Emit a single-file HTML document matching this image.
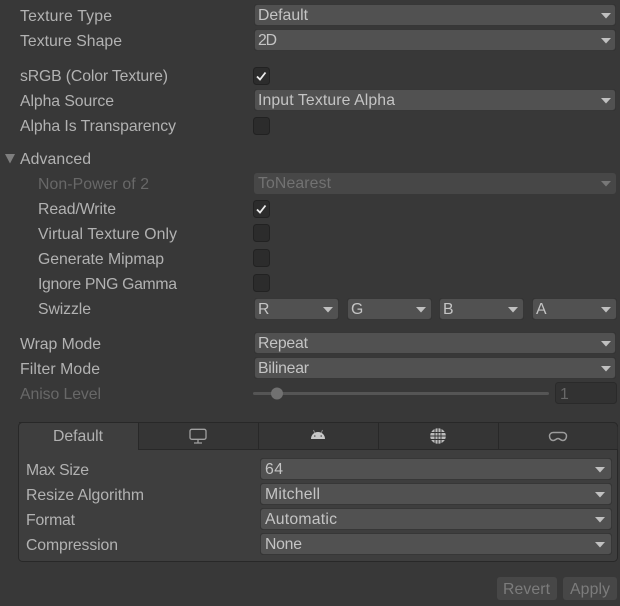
<!DOCTYPE html>
<html><head><meta charset="utf-8"><style>
html,body{margin:0;padding:0;background:#383838}
svg{display:block}
text{font-family:"Liberation Sans",sans-serif;font-size:15.8px;fill:#b2b2b2}
.d{fill:#686868}
.v{fill:#c4c4c4}
.dd{fill:#515151;stroke:#373737;stroke-width:1;filter:drop-shadow(0 .6px 0 #1e1e1e)}
.ar{fill:#c0c0c0}
.cb{fill:#2c2c2c;stroke:#222222;stroke-width:1}
.ck{fill:none;stroke:#ececec;stroke-width:1.800}
</style></head><body>
<svg width="620" height="606" viewBox="0 0 620 606" xmlns="http://www.w3.org/2000/svg">
<rect width="620" height="606" fill="#383838"/>

<text x="20" y="21" textLength="92">Texture Type</text>
<text x="20" y="46" textLength="102">Texture Shape</text>
<text x="20" y="81" textLength="148">sRGB (Color Texture)</text>
<text x="20" y="106" textLength="94">Alpha Source</text>
<text x="20" y="131" textLength="156">Alpha Is Transparency</text>
<text x="20" y="164" textLength="71">Advanced</text>
<text x="38" y="189" textLength="111" class="d">Non-Power of 2</text>
<text x="38" y="214" textLength="78">Read/Write</text>
<text x="38" y="239" textLength="139">Virtual Texture Only</text>
<text x="38" y="264" textLength="126">Generate Mipmap</text>
<text x="38" y="289" textLength="139">Ignore PNG Gamma</text>
<text x="38" y="314" textLength="53">Swizzle</text>
<text x="20" y="349" textLength="81">Wrap Mode</text>
<text x="20" y="374" textLength="80">Filter Mode</text>
<text x="20" y="399" textLength="81" class="d">Aniso Level</text>

<path d="M5 154h10l-5 9.500z" fill="#7e7e7e"/>

<rect class="dd" x="254.500" y="4.500" width="361" height="21" rx="3"/>
<text class="v" x="258" y="20" textLength="50">Default</text>
<path class="ar" d="M601 13h10l-5 5.500z"/>
<rect class="dd" x="254.500" y="29.500" width="361" height="21" rx="3"/>
<text class="v" x="258" y="45" textLength="19">2D</text>
<path class="ar" d="M601 38h10l-5 5.500z"/>

<rect class="cb" x="253.500" y="67.500" width="16" height="17" rx="3"/>
<path class="ck" d="M257 76.500l3 3 5.500-7"/>

<rect class="dd" x="254.500" y="89.500" width="361" height="21" rx="3"/>
<text class="v" x="258" y="105" textLength="137">Input Texture Alpha</text>
<path class="ar" d="M601 98h10l-5 5.500z"/>

<rect class="cb" x="253.500" y="117.500" width="16" height="17" rx="3"/>

<rect x="254" y="173" width="362" height="21" rx="3" fill="#474747"/>
<text class="d" x="258" y="188" textLength="73" style="fill:#727272">ToNearest</text>
<path d="M601 181h10l-5 5.500z" fill="#777"/>

<rect class="cb" x="253.500" y="200.500" width="16" height="17" rx="3"/>
<path class="ck" d="M257 209.500l3 3 5.500-7"/>
<rect class="cb" x="253.500" y="224.500" width="16" height="17" rx="3"/>
<rect class="cb" x="253.500" y="249.500" width="16" height="17" rx="3"/>
<rect class="cb" x="253.500" y="274.500" width="16" height="17" rx="3"/>

<rect class="dd" x="254.500" y="298.500" width="84" height="21" rx="3"/>
<text class="v" x="258" y="314" textLength="10">R</text>
<path class="ar" d="M323 307h10l-5 5.500z"/>
<rect class="dd" x="347.500" y="298.500" width="84" height="21" rx="3"/>
<text class="v" x="351" y="314" textLength="12">G</text>
<path class="ar" d="M416 307h10l-5 5.500z"/>
<rect class="dd" x="439.500" y="298.500" width="84" height="21" rx="3"/>
<text class="v" x="443" y="314" textLength="10">B</text>
<path class="ar" d="M508 307h10l-5 5.500z"/>
<rect class="dd" x="532.500" y="298.500" width="84" height="21" rx="3"/>
<text class="v" x="536" y="314" textLength="11">A</text>
<path class="ar" d="M601 307h10l-5 5.500z"/>

<rect class="dd" x="254.500" y="332.500" width="361" height="21" rx="3"/>
<text class="v" x="258" y="348" textLength="50">Repeat</text>
<path class="ar" d="M601 341h10l-5 5.500z"/>
<rect class="dd" x="254.500" y="357.500" width="361" height="21" rx="3"/>
<text class="v" x="258" y="373" textLength="51">Bilinear</text>
<path class="ar" d="M601 366h10l-5 5.500z"/>

<rect x="253" y="392" width="296" height="3" rx="1.500" fill="#555"/>
<circle cx="277" cy="393.500" r="6" fill="#717171"/>
<rect x="555.500" y="382.500" width="61" height="21" rx="3" fill="#323232" stroke="#2a2a2a"/>
<text class="d" x="560" y="399" textLength="6">1</text>

<!-- tab panel -->
<rect x="18.500" y="422.500" width="599" height="139" rx="4" fill="#3e3e3e" stroke="#282828"/>
<path d="M138.500 449.500V423h475a4 4 0 0 1 4 4v22.500z" fill="#353535"/>
<path d="M138.500 423v26.500H617.500M258.500 423v26M378.500 423v26M498.500 423v26" fill="none" stroke="#282828"/>
<path d="M19 422.500H613.500a4 4 0 0 1 4 4" fill="none" stroke="#282828"/>
<text x="53" y="441" textLength="50">Default</text>

<!-- monitor -->
<g fill="none" stroke="#a0a0a0" stroke-width="1.300">
<rect x="190" y="429.300" width="16" height="10" rx="1.800"/>
<path d="M198 439.500v3M194 443h8"/>
</g>
<!-- android -->
<path d="M311 439c0-4 3-7 7-7s7 3 7 7z" fill="#c8c8c8"/>
<path d="M313.500 430l1.200 3M322.500 430l-1.200 3" stroke="#8e8e8e" fill="none"/>
<circle cx="314.800" cy="436" r=".8" fill="#4a4a4a"/><circle cx="321.200" cy="436" r=".8" fill="#4a4a4a"/>
<!-- web -->
<circle cx="438" cy="436" r="7.800" fill="#bcbcbc"/>
<path d="M430 432.500h16M430 436h16M430 439.500h16M435 428v16M438 428v16M441 428v16" stroke="#353535" stroke-width=".9" fill="none"/>
<!-- vr -->
<path d="M553.500 432.500h9c2.500 0 4 1.500 4 3.500 0 2.500-1.500 4.500-3.700 4.500-2.200 0-2.800-2-4.800-2s-2.600 2-4.800 2c-2.200 0-3.700-2-3.700-4.500 0-2 1.500-3.500 4-3.500z" fill="none" stroke="#9c9c9c" stroke-width="1.500"/>

<text x="26" y="475" textLength="63">Max Size</text>
<text x="26" y="500" textLength="118">Resize Algorithm</text>
<text x="26" y="525" textLength="49">Format</text>
<text x="26" y="550" textLength="92">Compression</text>

<rect class="dd" x="260.500" y="458.500" width="351" height="21" rx="3"/>
<text class="v" x="265" y="474" textLength="18">64</text>
<path class="ar" d="M595 467h10l-5 5.500z"/>
<rect class="dd" x="260.500" y="483.500" width="351" height="21" rx="3"/>
<text class="v" x="265" y="499" textLength="55">Mitchell</text>
<path class="ar" d="M595 492h10l-5 5.500z"/>
<rect class="dd" x="260.500" y="508.500" width="351" height="21" rx="3"/>
<text class="v" x="265" y="524" textLength="72">Automatic</text>
<path class="ar" d="M595 517h10l-5 5.500z"/>
<rect class="dd" x="260.500" y="533.500" width="351" height="21" rx="3"/>
<text class="v" x="265" y="549" textLength="37">None</text>
<path class="ar" d="M595 542h10l-5 5.500z"/>

<rect x="497" y="577" width="60" height="23" rx="3" fill="#474747"/>
<text class="d" x="503" y="594" textLength="47" style="fill:#7c7c7c">Revert</text>
<rect x="563" y="577" width="54" height="23" rx="3" fill="#474747"/>
<text class="d" x="570" y="594" textLength="40" style="fill:#7c7c7c">Apply</text>
</svg>
</body></html>
